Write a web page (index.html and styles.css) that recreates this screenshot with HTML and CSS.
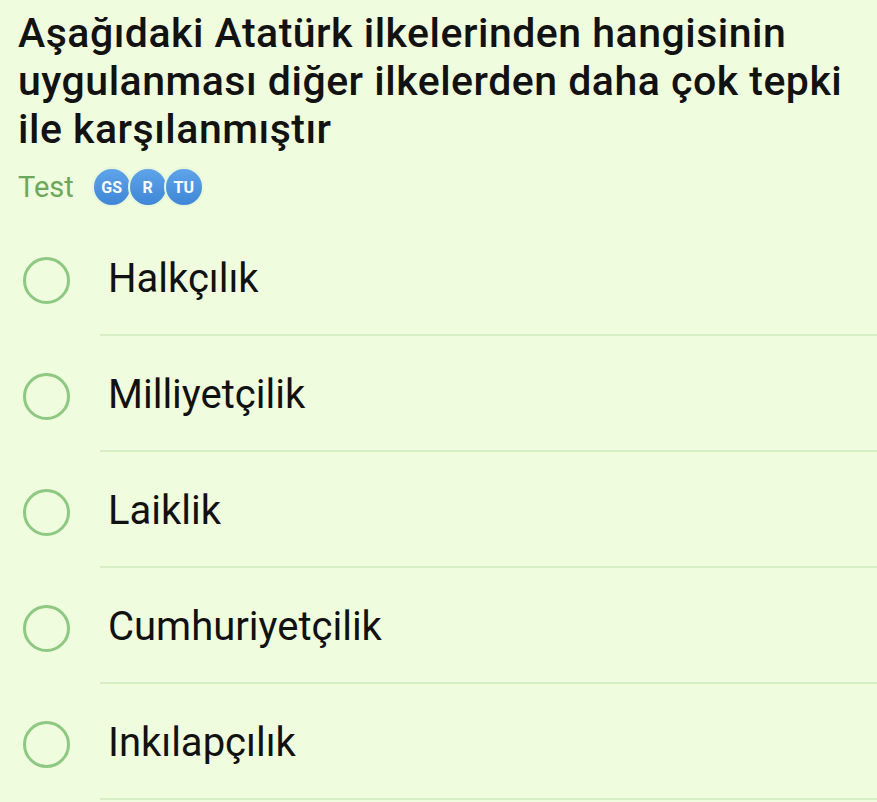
FILE: index.html
```html
<!DOCTYPE html>
<html lang="tr">
<head>
<meta charset="utf-8">
<link rel="stylesheet" href="styles.css">
</head>
<body>
<div class="page">
  <h1 class="question">Aşağıdaki Atatürk ilkelerinden hangisinin uygulanması diğer ilkelerden daha çok tepki ile karşılanmıştır</h1>
  <div class="meta">
    <span class="test">Test</span>
    <div class="badges">
      <span class="badge">GS</span>
      <span class="badge">R</span>
      <span class="badge">TU</span>
    </div>
  </div>
  <ul class="options">
    <li class="option"><span class="radio"></span><span class="label">Halkçılık</span></li>
    <li class="option"><span class="radio"></span><span class="label">Milliyetçilik</span></li>
    <li class="option"><span class="radio"></span><span class="label">Laiklik</span></li>
    <li class="option"><span class="radio"></span><span class="label">Cumhuriyetçilik</span></li>
    <li class="option"><span class="radio"></span><span class="label">Inkılapçılık</span></li>
  </ul>
</div>
</body>
</html>
```
FILE: styles.css
```css
html, body {
  margin: 0;
  padding: 0;
  background: #effcdd;
}
body {
  font-family: Roboto, "Noto Sans", sans-serif;
  color: #111;
}
.page {
  width: 877px;
  height: 802px;
  overflow: hidden;
}
.question {
  margin: 0;
  padding: 9px 14px 0 18px;
  font-size: 41px;
  font-weight: 500;
  letter-spacing: 0.5px;
  line-height: 48px;
  color: #121212;
}
.meta {
  display: flex;
  align-items: center;
  padding: 0 18px;
  margin-top: 14px;
  height: 40px;
}
.test {
  font-size: 29px;
  color: #6ca85c;
  margin-right: 18px;
}
.badges {
  display: flex;
}
.badge {
  width: 40px;
  height: 40px;
  box-sizing: border-box;
  border-radius: 50%;
  border: 2px solid #e6f7dc;
  background: linear-gradient(#5ea4ea, #3f86d6);
  color: #fff;
  font-size: 16px;
  font-weight: 700;
  display: flex;
  align-items: center;
  justify-content: center;
  margin-right: -4px;
}
.options {
  list-style: none;
  margin: 13px 0 0 0;
  padding: 0;
}
.option {
  display: flex;
  align-items: center;
  height: 116px;
  position: relative;
}
.option::after {
  content: "";
  position: absolute;
  left: 100px;
  right: 0;
  bottom: 0;
  height: 2px;
  background: #d6eec6;
}
.radio {
  width: 47px;
  height: 47px;
  box-sizing: border-box;
  border: 3px solid #8ec882;
  border-radius: 50%;
  margin-left: 23px;
  margin-right: 38px;
  margin-top: 4px;
}
.label {
  font-size: 40px;
  color: #111;
}
```
